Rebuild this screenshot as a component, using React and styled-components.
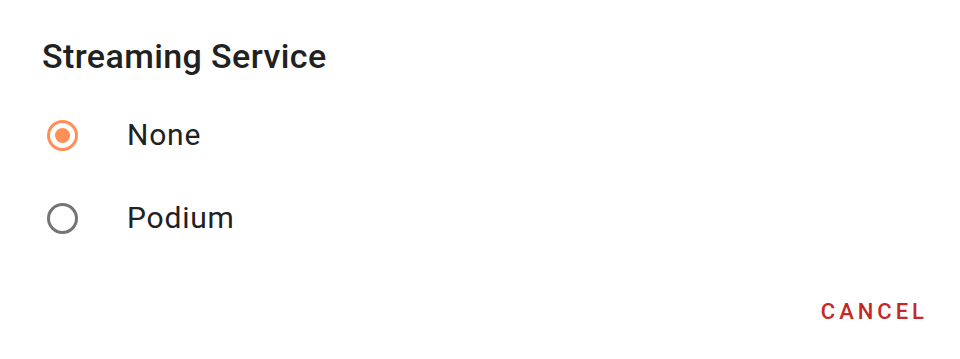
import styled, { createGlobalStyle } from "styled-components";

const GlobalStyle = createGlobalStyle`
  html, body {
    margin: 0;
    padding: 0;
    background: #ffffff;
  }
  body {
    font-family: Roboto, "Noto Sans", sans-serif;
  }
`

const Dialog = styled.div`
  width: 960px;
  height: 359px;
  box-sizing: border-box;
  background: #ffffff;
  display: flex;
  flex-direction: column;
  padding: 36px 0 21px;
`

const Title = styled.h2`
  margin: 0 0 18px;
  padding: 0 42px;
  font-size: 34px;
  font-weight: 500;
  letter-spacing: 0.4px;
  line-height: normal;
  color: #212121;
`

const OptionList = styled.div`
  display: flex;
  flex-direction: column;
`

const Option = styled.label`
  display: flex;
  align-items: center;
  height: 83px;
  padding-left: 47px;
  gap: 49px;
  cursor: pointer;
`

const Radio = styled.span`
  box-sizing: border-box;
  flex: none;
  width: 31px;
  height: 31px;
  border-radius: 50%;
  border: 3px solid ${({ $checked }) => ($checked ? "#ff8f55" : "#757575")};
  display: flex;
  align-items: center;
  justify-content: center;

  &::after {
    content: "";
    width: 15px;
    height: 15px;
    border-radius: 50%;
    background: #ff8f55;
    display: ${({ $checked }) => ($checked ? "block" : "none")};
  }
`

const OptionText = styled.span`
  font-size: 30px;
  color: #212121;
  letter-spacing: 0.8px;
  margin-top: -3px;
`

const Actions = styled.div`
  margin-top: auto;
  display: flex;
  justify-content: flex-end;
  padding-right: 24px;
`

const TextButton = styled.button`
  border: none;
  background: none;
  height: 54px;
  padding: 0 8px 0 12px;
  font-family: Roboto, "Noto Sans", sans-serif;
  font-size: 22px;
  font-weight: 500;
  letter-spacing: 4px;
  text-transform: uppercase;
  color: #c62828;
  cursor: pointer;
`

const options = [
  { label: "None", checked: true },
  { label: "Podium", checked: false },
];

const App = () => {
  return (
    <>
      <GlobalStyle />
      <Dialog>
        <Title>Streaming Service</Title>
        <OptionList>
          {options.map((option) => (
            <Option key={option.label}>
              <Radio $checked={option.checked} />
              <OptionText>{option.label}</OptionText>
            </Option>
          ))}
        </OptionList>
        <Actions>
          <TextButton>Cancel</TextButton>
        </Actions>
      </Dialog>
    </>
  );
};

export default App;
